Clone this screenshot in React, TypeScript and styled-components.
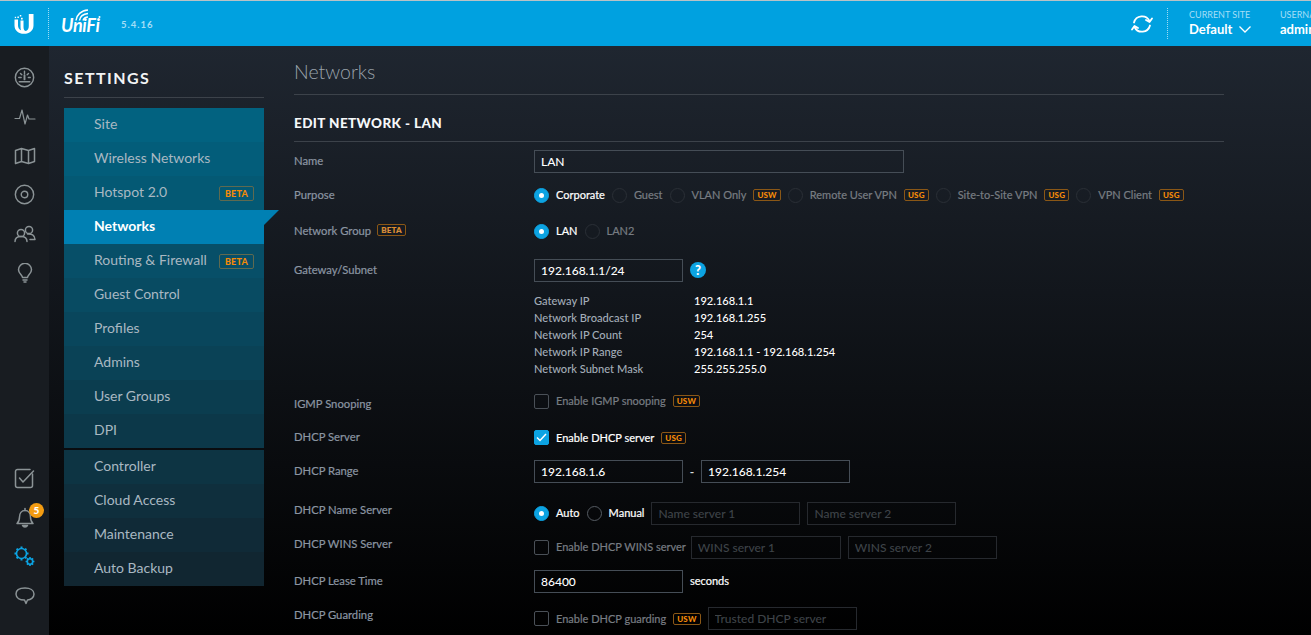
import React from "react";
import styled, { createGlobalStyle } from "styled-components";

const GlobalStyle = createGlobalStyle`
  html, body {
    margin: 0;
    padding: 0;
    height: 100%;
    overflow: hidden;
    background: #000;
  }
  * { box-sizing: border-box; }
  body {
    font-family: Lato, "Noto Sans", sans-serif;
    font-size: 12px;
  }
`;

const menuTop = [2, 98, 128];
const menuBottom = [18, 33, 43];
const menuColor = (i: number) => {
  const t = i / 14;
  const c = menuTop.map((v, k) => Math.round(v + (menuBottom[k] - v) * t));
  return `rgb(${c[0]}, ${c[1]}, ${c[2]})`;
};

const Page = styled.div`
  width: 1311px;
  height: 635px;
  display: flex;
  flex-direction: column;
  overflow: hidden;
`;

const Header = styled.header`
  height: 46px;
  flex-shrink: 0;
  display: flex;
  align-items: center;
  background: #00a1e0;
  border-top: 1px solid #b9c2c6;
  overflow: hidden;
  color: #fff;
`;

const LogoSlot = styled.div`
  width: 48px;
  display: flex;
  justify-content: center;
  padding-right: 0;
`;

const DottedRule = styled.div`
  width: 1px;
  height: 31px;
  flex-shrink: 0;
  border-left: 1px dotted #9fdcf5;
`;

const Brand = styled.div`
  display: flex;
  align-items: center;
  padding-left: 12px;
`;

const BrandMark = styled.div`
  position: relative;
  width: 40px;
  height: 30px;
`;

const BrandName = styled.span`
  position: absolute;
  left: 0;
  bottom: 5px;
  font-size: 18px;
  line-height: 18px;
  font-weight: 700;
  font-style: italic;
  letter-spacing: -0.3px;
`;

const BrandArcs = styled.svg`
  position: absolute;
  left: 14px;
  top: 0;
`;

const Version = styled.span`
  margin-left: 20px;
  padding-top: 1px;
  font-size: 9.5px;
  font-weight: 700;
  letter-spacing: 1px;
  color: #a4def6;
`;

const HeaderRight = styled.div`
  margin-left: auto;
  width: 180px;
  flex-shrink: 0;
  display: flex;
  align-items: center;
`;

const SyncSlot = styled.div`
  width: 36px;
  flex-shrink: 0;
  display: flex;
  align-items: center;
`;

const HeaderMeta = styled.div<{ $width: number }>`
  width: ${(p) => p.$width}px;
  flex-shrink: 0;
  display: flex;
  flex-direction: column;
  white-space: nowrap;
`;

const MetaGap = styled.div`
  width: 21px;
  flex-shrink: 0;
`;

const MetaLabel = styled.span`
  font-size: 9px;
  line-height: 12px;
  color: #a4def6;
`;

const MetaValue = styled.span`
  font-size: 13px;
  line-height: 17px;
  font-weight: 700;
  display: flex;
  align-items: center;
  gap: 7px;
`;

const Body = styled.div`
  flex: 1;
  min-height: 0;
  display: flex;
`;

const Rail = styled.nav`
  width: 49px;
  flex-shrink: 0;
  display: flex;
  flex-direction: column;
  justify-content: space-between;
  padding: 12px 0 20px;
  background: #181c21;
`;

const RailGroup = styled.div`
  display: flex;
  flex-direction: column;
`;

const RailSlot = styled.div`
  position: relative;
  height: 39px;
  display: flex;
  align-items: center;
  justify-content: center;
`;

const Bubble = styled.span`
  position: absolute;
  top: 5px;
  left: 29px;
  width: 15px;
  height: 15px;
  border-radius: 50%;
  background: #f39c12;
  color: #fff;
  font-size: 10px;
  font-weight: 900;
  line-height: 15px;
  text-align: center;
`;

const Main = styled.div`
  flex: 1;
  min-width: 0;
  display: flex;
  background: linear-gradient(180deg, #1f2630 0%, #000 100%);
`;

const Side = styled.aside`
  width: 200px;
  margin-left: 15px;
  padding-top: 22px;
  flex-shrink: 0;
`;

const SideTitle = styled.div`
  height: 30px;
  line-height: 20px;
  font-size: 16px;
  font-weight: 700;
  letter-spacing: 1.45px;
  color: #f2f4f5;
  border-bottom: 1px solid #3c424a;
`;

const Menu = styled.ul`
  list-style: none;
  margin: 10px 0 0;
  padding: 0;
`;

const MenuItem = styled.li<{ $index: number; $active?: boolean; $gap?: boolean }>`
  position: relative;
  height: 34px;
  margin-bottom: ${(p) => (p.$gap ? 2 : 0)}px;
  padding: 0 10px 4px 30px;
  display: flex;
  align-items: center;
  justify-content: space-between;
  font-size: 14px;
  font-weight: ${(p) => (p.$active ? 700 : 400)};
  color: ${(p) => (p.$active ? "#fff" : "#a9b8c2")};
  background: ${(p) => (p.$active ? "#0080b3" : menuColor(p.$index))};

  ${(p) =>
    p.$active &&
    `&::after {
      content: "";
      position: absolute;
      left: 100%;
      top: 0;
      border-top: 15px solid #0080b3;
      border-right: 15px solid transparent;
    }`}
`;

const Badge = styled.span<{ $large?: boolean }>`
  display: inline-block;
  flex-shrink: 0;
  padding: 0 ${(p) => (p.$large ? 5 : 3)}px;
  height: ${(p) => (p.$large ? 15 : 12)}px;
  line-height: ${(p) => (p.$large ? 13 : 10)}px;
  font-size: ${(p) => (p.$large ? 9 : 8)}px;
  font-weight: 900;
  letter-spacing: 0.2px;
  color: #f58a07;
  border: 1px solid ${(p) => (p.$large ? "#5f6a50" : "#8a5716")};
  border-radius: 2px;
`;

const MenuBadge = styled(Badge)`
  margin-top: 4px;
`;

const Content = styled.main`
  width: 930px;
  margin-left: 30px;
  flex-shrink: 0;
`;

const PageTitle = styled.h1`
  margin: 14px 0 0;
  height: 35px;
  line-height: 23px;
  font-size: 19.5px;
  font-weight: 300;
  color: #9aa3ab;
  border-bottom: 1px solid #3c424a;
`;

const SectionTitle = styled.h2`
  margin: 19px 0 0;
  height: 28px;
  line-height: 18px;
  font-size: 13.5px;
  font-weight: 900;
  letter-spacing: 0.4px;
  color: #f6f8f9;
  border-bottom: 1px solid #3c424a;
`;

const Form = styled.div`
  padding-top: 2px;
`;

const Row = styled.div<{ $height: number }>`
  height: ${(p) => p.$height}px;
  display: grid;
  grid-template-columns: 240px 1fr;
  align-items: center;
`;

const RowLabel = styled.div<{ $drop?: number }>`
  display: flex;
  align-items: center;
  gap: 6px;
  font-size: 11.25px;
  font-weight: 400;
  -webkit-text-stroke: 0.2px #8b95a2;
  color: #8b95a2;
  padding-top: ${(p) => p.$drop ?? 0}px;
  padding-bottom: 2px;
`;

const Controls = styled.div<{ $drop?: number; $lift?: number }>`
  display: flex;
  align-items: center;
  gap: 7px;
  white-space: nowrap;
  padding-top: ${(p) => p.$drop ?? 0}px;
  padding-bottom: ${(p) => p.$lift ?? 0}px;
`;

const Field = styled.input<{ $width: number; $dim?: boolean }>`
  width: ${(p) => p.$width}px;
  height: 23px;
  padding: 0 6px;
  font-family: inherit;
  font-size: 12px;
  font-weight: 500;
  color: #fff;
  background: transparent;
  border: 1px solid ${(p) => (p.$dim ? "#26292e" : "#454d56")};
  border-radius: 0;
  outline: none;

  &::placeholder {
    color: #3e4348;
    opacity: 1;
  }
`;

const Radio = styled.span<{ $on?: boolean; $bright?: boolean }>`
  display: inline-block;
  position: relative;
  width: 15px;
  height: 15px;
  flex-shrink: 0;
  border-radius: 50%;
  background: ${(p) => (p.$on ? "#0ca3e2" : "transparent")};
  border: 1px solid
    ${(p) => (p.$on ? "#0ca3e2" : p.$bright ? "#555b62" : "#2a2f36")};

  ${(p) =>
    p.$on &&
    `&::after {
      content: "";
      position: absolute;
      left: 4px;
      top: 4px;
      width: 5px;
      height: 5px;
      border-radius: 50%;
      background: #fff;
    }`}
`;

const CheckBox = styled.span<{ $on?: boolean }>`
  display: inline-flex;
  align-items: center;
  justify-content: center;
  width: 15px;
  height: 15px;
  flex-shrink: 0;
  border-radius: 2px;
  background: ${(p) => (p.$on ? "#0ca3e2" : "transparent")};
  border: 1px solid ${(p) => (p.$on ? "#0ca3e2" : "#4a5057")};
`;

const OptionText = styled.span<{ $on?: boolean; $tight?: boolean }>`
  padding-bottom: 1px;
  margin-right: ${(p) => (p.$tight ? -2 : 0)}px;
  font-size: 11px;
  font-weight: 400;
  color: ${(p) => (p.$on ? "#fff" : "#777c82")};
  -webkit-text-stroke: 0.2px ${(p) => (p.$on ? "#fff" : "#777c82")};
`;

const Help = styled.span`
  width: 16px;
  height: 16px;
  border-radius: 50%;
  background: #0ca3e2;
  color: #fff;
  font-size: 13px;
  font-weight: 900;
  line-height: 16px;
  text-align: center;
`;

const Dash = styled.span`
  width: 18px;
  margin: 0 -7px;
  text-align: center;
  color: #d5d9dc;
  font-size: 12px;
  font-weight: 700;
`;

const InfoBlock = styled.div`
  margin-left: 240px;
  padding-top: 2px;
  height: 97px;
`;

const InfoRow = styled.div`
  height: 17px;
  line-height: 17px;
  display: grid;
  grid-template-columns: 160px 1fr;
  font-size: 11.1px;
  font-weight: 500;
  color: #a3adb8;
`;

const InfoValue = styled.span`
  color: #fff;
`;

const railStroke = {
  fill: "none",
  stroke: "#8b9396",
  strokeWidth: 1.5,
  strokeLinecap: "round" as const,
  strokeLinejoin: "round" as const,
};

const GaugeIcon = () => (
  <svg width="21" height="21" viewBox="0 0 22 22" {...railStroke}>
    <circle cx="11" cy="11" r="9.6" />
    <path d="M11 4.500v2.500M5 11h2.500M15 11h2M6.800 6.800l1.400 1.400M15.200 6.800l-1.400 1.400M5.500 15.500h11" />
    <path d="M11 8.500v4.500" strokeWidth="2" />
  </svg>
);

const PulseIcon = () => (
  <svg width="22" height="18" viewBox="0 0 22 18" {...railStroke} strokeWidth="1.2">
    <path d="M1 10.500h4.500l2.500-8.500 3 14 2.500-9 1.500 4h6" />
  </svg>
);

const MapIcon = () => (
  <svg width="22" height="18" viewBox="0 0 22 18" {...railStroke}>
    <path d="M1.500 3.500L7.500 1.500l7 2 6-2v13l-6 2-7-2-6 2zM7.500 1.500v13M14.500 3.500v13" />
  </svg>
);

const TargetIcon = () => (
  <svg width="21" height="21" viewBox="0 0 22 22" {...railStroke}>
    <circle cx="11" cy="11" r="9.6" />
    <circle cx="11" cy="11" r="3.4" />
  </svg>
);

const UsersIcon = () => (
  <svg width="22" height="18" viewBox="0 0 22 18" {...railStroke}>
    <circle cx="7" cy="8" r="3.6" />
    <path d="M1 16.500c0-3 2.400-5 6-5s6 2 6 5" />
    <circle cx="15" cy="5" r="3.6" />
    <path d="M13.500 9c3.800-.6 7.500 1.400 7.500 5.500h-5" />
  </svg>
);

const BulbIcon = () => (
  <svg width="16" height="20" viewBox="0 0 16 20" {...railStroke}>
    <path d="M5.500 14.500c0-2.500-4-3.800-4-7.700a6.500 6.500 0 0 1 13 0c0 3.900-4 5.200-4 7.700z" />
    <path d="M6 17h4M7 19h2" />
  </svg>
);

const TasksIcon = () => (
  <svg width="21" height="21" viewBox="0 0 21 21" {...railStroke}>
    <path d="M18.500 6v11.500a2 2 0 0 1-2 2h-13a2 2 0 0 1-2-2v-14a2 2 0 0 1 2-2H16" />
    <path d="M5.500 10l3.500 4L19.500 3" />
  </svg>
);

const BellIcon = () => (
  <svg width="20" height="21" viewBox="0 0 20 21" {...railStroke}>
    <path d="M2 16.500c1.800-1.600 2.500-3 2.500-6.500 0-3.500 2-6.500 5.500-6.500s5.500 3 5.500 6.500c0 3.500.7 4.900 2.500 6.500z" />
    <path d="M10 1.500v2" />
    <path d="M7.500 18.500c.5 1 1.300 1.500 2.500 1.500s2-.5 2.500-1.500z" fill="#8b9396" />
  </svg>
);

const cogTeeth = (cx: number, cy: number, inner: number, outer: number) =>
  Array.from({ length: 8 }, (_, i) => {
    const a = (i * Math.PI) / 4;
    const x1 = cx + Math.cos(a) * inner;
    const y1 = cy + Math.sin(a) * inner;
    const x2 = cx + Math.cos(a) * outer;
    const y2 = cy + Math.sin(a) * outer;
    return `M${x1.toFixed(1)} ${y1.toFixed(1)}L${x2.toFixed(1)} ${y2.toFixed(1)}`;
  }).join("");

const GearsIcon = () => (
  <svg width="21" height="21" viewBox="0 0 21 21" fill="none" stroke="#0ca3e2" strokeWidth="1.6">
    <circle cx="7.500" cy="7.500" r="5" />
    <path d={cogTeeth(7.5, 7.5, 5, 7)} strokeWidth="2" />
    <circle cx="16" cy="15.500" r="2.700" />
    <path d={cogTeeth(16, 15.5, 2.7, 4.4)} strokeWidth="1.6" />
  </svg>
);

const ChatIcon = () => (
  <svg width="20" height="18" viewBox="0 0 20 18" {...railStroke}>
    <path d="M10 1c5 0 9 2.200 9 6s-3.500 5.800-6.500 6L11 16.500 9.500 13C5 13 1 11 1 7s4-6 9-6z" />
  </svg>
);

const SyncIcon = () => (
  <svg width="22" height="22" viewBox="0 0 22 22" fill="none" stroke="#fff" strokeWidth="1.8" strokeLinecap="round" strokeLinejoin="round">
    <path d="M3 9.500A8.300 8.300 0 0 1 18.500 8" />
    <path d="M21 5.500l-2.500 3.500-3.500-2" />
    <path d="M19 12.500A8.300 8.300 0 0 1 3.500 14" />
    <path d="M1 16.500l2.500-3.500 3.500 2" />
  </svg>
);

const Chevron = () => (
  <svg width="12" height="7" viewBox="0 0 12 7" fill="none" stroke="#fff" strokeWidth="1.3">
    <path d="M.5.5L6 6 11.500.5" />
  </svg>
);

const CheckMark = () => (
  <svg width="11" height="9" viewBox="0 0 11 9" fill="none" stroke="#fff" strokeWidth="1.5">
    <path d="M1 4.500l3 3L10 1" />
  </svg>
);

const UbntLogo = () => (
  <svg width="20" height="20" viewBox="0 0 20 20" fill="#fff">
    <path d="M14.800 0H19.500V11.500C19.500 16.500 15.500 19.800 10 19.800S.5 16.500.5 11.500V5.500H4V11.500C4 13.800 5.200 15.500 7 16.300 6.600 15 6.500 13.800 6.500 12.500V6.500H9.500V13C9.500 15.500 10.500 17 12 17 13.800 16.500 14.800 14.500 14.800 12z" />
    <rect x="5.800" y="1" width="1.500" height="1.500" />
    <rect x="3.400" y="2.500" width="1.500" height="1.500" />
    <rect x=".8" y="2.800" width="1.300" height="1.300" />
    <rect x="7" y="3.800" width="1.700" height="1.700" />
  </svg>
);

const menuItems = [
  { label: "Site" },
  { label: "Wireless Networks" },
  { label: "Hotspot 2.0", beta: true },
  { label: "Networks", active: true },
  { label: "Routing & Firewall", beta: true },
  { label: "Guest Control" },
  { label: "Profiles" },
  { label: "Admins" },
  { label: "User Groups" },
  { label: "DPI", gap: true },
  { label: "Controller" },
  { label: "Cloud Access" },
  { label: "Maintenance" },
  { label: "Auto Backup" },
];

const networkInfo = [
  ["Gateway IP", "192.168.1.1"],
  ["Network Broadcast IP", "192.168.1.255"],
  ["Network IP Count", "254"],
  ["Network IP Range", "192.168.1.1 - 192.168.1.254"],
  ["Network Subnet Mask", "255.255.255.0"],
];

const purposes = [
  { label: "Corporate", on: true },
  { label: "Guest" },
  { label: "VLAN Only", badge: "USW" },
  { label: "Remote User VPN", badge: "USG" },
  { label: "Site-to-Site VPN", badge: "USG" },
  { label: "VPN Client", badge: "USG" },
];

export default function App() {
  return (
    <Page>
      <GlobalStyle />
      <Header>
        <LogoSlot>
          <UbntLogo />
        </LogoSlot>
        <DottedRule />
        <Brand>
          <BrandMark>
            <BrandArcs width="27" height="12" viewBox="0 0 27 12" fill="none" stroke="#fff" strokeWidth="1.5">
              <path d="M1 11.500C1.500 6 6 1.500 13 1" />
              <path d="M4.500 11.500C5 8 8 5 13 4.500" />
              <path d="M8 11.500C8.500 10 10.500 8 13 8" />
              <circle cx="24.500" cy="8" r="1" fill="#fff" stroke="none" />
            </BrandArcs>
            <BrandName>UniFi</BrandName>
          </BrandMark>
          <Version>5.4.16</Version>
        </Brand>
        <HeaderRight>
          <SyncSlot>
            <SyncIcon />
          </SyncSlot>
          <DottedRule />
          <MetaGap />
          <HeaderMeta $width={91}>
            <MetaLabel>CURRENT SITE</MetaLabel>
            <MetaValue>
              Default <Chevron />
            </MetaValue>
          </HeaderMeta>
          <HeaderMeta $width={60}>
            <MetaLabel>USERNAME</MetaLabel>
            <MetaValue>admin</MetaValue>
          </HeaderMeta>
        </HeaderRight>
      </Header>
      <Body>
        <Rail>
          <RailGroup>
            <RailSlot><GaugeIcon /></RailSlot>
            <RailSlot><PulseIcon /></RailSlot>
            <RailSlot><MapIcon /></RailSlot>
            <RailSlot><TargetIcon /></RailSlot>
            <RailSlot><UsersIcon /></RailSlot>
            <RailSlot><BulbIcon /></RailSlot>
          </RailGroup>
          <RailGroup>
            <RailSlot><TasksIcon /></RailSlot>
            <RailSlot>
              <BellIcon />
              <Bubble>5</Bubble>
            </RailSlot>
            <RailSlot><GearsIcon /></RailSlot>
            <RailSlot><ChatIcon /></RailSlot>
          </RailGroup>
        </Rail>
        <Main>
          <Side>
            <SideTitle>SETTINGS</SideTitle>
            <Menu>
              {menuItems.map((item, i) => (
                <MenuItem key={item.label} $index={i} $active={item.active} $gap={item.gap}>
                  {item.label}
                  {item.beta && <MenuBadge $large>BETA</MenuBadge>}
                </MenuItem>
              ))}
            </Menu>
          </Side>
          <Content>
            <PageTitle>Networks</PageTitle>
            <SectionTitle>EDIT NETWORK - LAN</SectionTitle>
            <Form>
              <Row $height={34}>
                <RowLabel>Name</RowLabel>
                <Controls>
                  <Field $width={370} defaultValue="LAN" />
                </Controls>
              </Row>
              <Row $height={34}>
                <RowLabel>Purpose</RowLabel>
                <Controls>
                  {purposes.map((p) => (
                    <React.Fragment key={p.label}>
                      <Radio $on={p.on} />
                      <OptionText $on={p.on}>{p.label}</OptionText>
                      {p.badge && <Badge>{p.badge}</Badge>}
                    </React.Fragment>
                  ))}
                </Controls>
              </Row>
              <Row $height={38}>
                <RowLabel>
                  Network Group <Badge>BETA</Badge>
                </RowLabel>
                <Controls>
                  <Radio $on />
                  <OptionText $on>LAN</OptionText>
                  <Radio />
                  <OptionText>LAN2</OptionText>
                </Controls>
              </Row>
              <Row $height={40}>
                <RowLabel>Gateway/Subnet</RowLabel>
                <Controls>
                  <Field $width={149} defaultValue="192.168.1.1/24" />
                  <Help>?</Help>
                </Controls>
              </Row>
              <InfoBlock>
                {networkInfo.map(([label, value]) => (
                  <InfoRow key={label}>
                    {label}
                    <InfoValue>{value}</InfoValue>
                  </InfoRow>
                ))}
              </InfoBlock>
              <Row $height={34}>
                <RowLabel>IGMP Snooping</RowLabel>
                <Controls $lift={6}>
                  <CheckBox />
                  <OptionText>Enable IGMP snooping</OptionText>
                  <Badge>USW</Badge>
                </Controls>
              </Row>
              <Row $height={33}>
                <RowLabel>DHCP Server</RowLabel>
                <Controls>
                  <CheckBox $on><CheckMark /></CheckBox>
                  <OptionText $on>Enable DHCP server</OptionText>
                  <Badge>USG</Badge>
                </Controls>
              </Row>
              <Row $height={35}>
                <RowLabel>DHCP Range</RowLabel>
                <Controls>
                  <Field $width={149} defaultValue="192.168.1.6" />
                  <Dash>-</Dash>
                  <Field $width={149} defaultValue="192.168.1.254" />
                </Controls>
              </Row>
              <Row $height={40}>
                <RowLabel $drop={2}>DHCP Name Server</RowLabel>
                <Controls $drop={8}>
                  <Radio $on />
                  <OptionText $on>Auto</OptionText>
                  <Radio $bright />
                  <OptionText $on>Manual</OptionText>
                  <Field $width={149} $dim placeholder="Name server 1" />
                  <Field $width={149} $dim placeholder="Name server 2" />
                </Controls>
              </Row>
              <Row $height={30}>
                <RowLabel>DHCP WINS Server</RowLabel>
                <Controls $drop={6}>
                  <CheckBox />
                  <OptionText $tight>Enable DHCP WINS server</OptionText>
                  <Field $width={150} $dim placeholder="WINS server 1" />
                  <Field $width={149} $dim placeholder="WINS server 2" />
                </Controls>
              </Row>
              <Row $height={40}>
                <RowLabel $drop={4}>DHCP Lease Time</RowLabel>
                <Controls $drop={4}>
                  <Field $width={149} defaultValue="86400" />
                  <OptionText $on>seconds</OptionText>
                </Controls>
              </Row>
              <Row $height={32}>
                <RowLabel>DHCP Guarding</RowLabel>
                <Controls $drop={7}>
                  <CheckBox />
                  <OptionText>Enable DHCP guarding</OptionText>
                  <Badge>USW</Badge>
                  <Field $width={149} $dim placeholder="Trusted DHCP server" />
                </Controls>
              </Row>
            </Form>
          </Content>
        </Main>
      </Body>
    </Page>
  );
}
